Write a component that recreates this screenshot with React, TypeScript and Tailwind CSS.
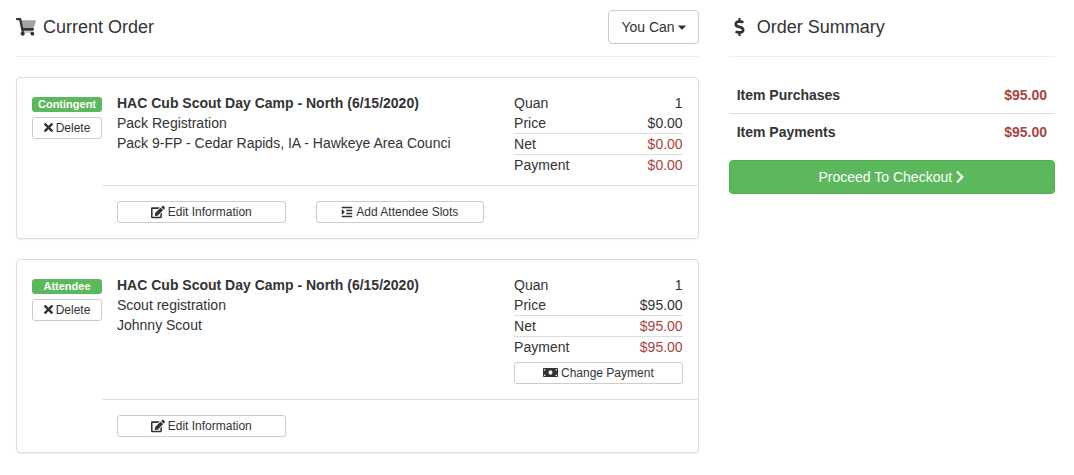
import type { ReactNode } from 'react';
import {
  FaCaretDown,
  FaChevronRight,
  FaDollarSign,
  FaEdit,
  FaIndent,
  FaMoneyBill,
  FaTimes,
} from 'react-icons/fa';

interface OrderItem {
  id: string;
  kind: string;
  title: string;
  lines: string[];
  quantity: number;
  price: string;
  net: string;
  payment: string;
  canChangePayment: boolean;
  canAddSlots: boolean;
}

const ITEMS: OrderItem[] = [
  {
    id: 'contingent',
    kind: 'Contingent',
    title: 'HAC Cub Scout Day Camp - North (6/15/2020)',
    lines: ['Pack Registration', 'Pack 9-FP - Cedar Rapids, IA - Hawkeye Area Counci'],
    quantity: 1,
    price: '$0.00',
    net: '$0.00',
    payment: '$0.00',
    canChangePayment: false,
    canAddSlots: true,
  },
  {
    id: 'attendee',
    kind: 'Attendee',
    title: 'HAC Cub Scout Day Camp - North (6/15/2020)',
    lines: ['Scout registration', 'Johnny Scout'],
    quantity: 1,
    price: '$95.00',
    net: '$95.00',
    payment: '$95.00',
    canChangePayment: true,
    canAddSlots: false,
  },
];

const TOTALS = [
  { label: 'Item Purchases', amount: '$95.00' },
  { label: 'Item Payments', amount: '$95.00' },
];

function CartIcon() {
  return (
    <svg viewBox="0 0 576 512" className="h-[18px] w-5" fill="currentColor" aria-hidden="true">
      <path
        opacity="0.45"
        d="M552 64H112l46 224h330c11 0 21-8 23-19l64-176c4-15-8-29-23-29z"
      />
      <path d="M504 405c15 10 24 25 24 43a56 56 0 1 1-95-40H231a56 56 0 1 1-67-10L94 64H24C11 64 0 53 0 40V24C0 11 11 0 24 0h102c12 0 22 8 24 19l55 269h288c15 0 26 14 23 29l-5 25c-3 11-12 19-24 19H218l7 32h256c15 0 26 0 23 12z" />
    </svg>
  );
}

function SmallButton({ children }: { children: ReactNode }) {
  return (
    <button
      type="button"
      className="flex h-[22px] w-full cursor-pointer items-center justify-center gap-[3px] rounded-[3px] border border-[#ccc] bg-white text-xs text-[#333] hover:bg-[#e6e6e6] [&>svg]:mb-px"
    >
      {children}
    </button>
  );
}

function PriceTable({ item }: { item: OrderItem }) {
  return (
    <table className="mb-[5px] w-full border-separate border-spacing-0">
      <tbody>
        <tr>
          <th className="text-left font-normal">Quan</th>
          <td className="text-right">{item.quantity}</td>
        </tr>
        <tr>
          <th className="text-left font-normal">Price</th>
          <td className="text-right">{item.price}</td>
        </tr>
        <tr>
          <th className="border-t border-[#ddd] text-left font-normal">Net</th>
          <td className="border-t border-[#ddd] text-right text-[#a94442]">{item.net}</td>
        </tr>
        <tr>
          <th className="border-t border-[#ddd] text-left font-normal">Payment</th>
          <td className="border-t border-[#ddd] text-right text-[#a94442]">{item.payment}</td>
        </tr>
      </tbody>
    </table>
  );
}

function OrderCard({ item }: { item: OrderItem }) {
  return (
    <article className="mb-5 flex rounded border border-[#ddd] bg-white py-[15px] pl-[15px] shadow-[0_1px_1px_rgba(0,0,0,0.05)]">
      <div className="w-[70px] shrink-0 pt-1">
        <div className="mb-[5px] h-[15px] rounded-[3px] bg-[#5cb85c] text-center text-[11px] leading-[15px] font-bold text-white">
          {item.kind}
        </div>
        <SmallButton>
          <FaTimes className="h-[13px] w-[9px]" />
          Delete
        </SmallButton>
      </div>
      <div className="min-w-0 flex-1">
        <div className="grid grid-cols-3 gap-x-[30px] px-[15px] pb-[5px]">
          <div className="col-span-2">
            <h3 className="font-bold">{item.title}</h3>
            {item.lines.map((line) => (
              <p key={line}>{line}</p>
            ))}
          </div>
          <div>
            <PriceTable item={item} />
            {item.canChangePayment && (
              <div className="mb-[10px]">
                <SmallButton>
                  <FaMoneyBill className="size-[15px]" />
                  Change Payment
                </SmallButton>
              </div>
            )}
          </div>
        </div>
        <div className="grid grid-cols-3 gap-x-[30px] border-t border-[#ddd] px-[15px] pt-[15px]">
          <SmallButton>
            <FaEdit className="size-[14px]" />
            Edit Information
          </SmallButton>
          {item.canAddSlots && (
            <SmallButton>
              <FaIndent className="size-3" />
              Add Attendee Slots
            </SmallButton>
          )}
        </div>
      </div>
    </article>
  );
}

export default function App() {
  return (
    <main className="grid grid-cols-3 gap-x-[30px] bg-white pt-[10px] pr-[19px] pl-4 font-['Liberation_Sans',Arial,sans-serif] text-sm leading-5 text-[#333]">
      <section className="col-span-2">
        <header className="mb-5 flex items-start justify-between border-b border-[#eee] pb-3">
          <h2 className="flex h-[34px] items-center gap-[7px] text-lg">
            <CartIcon />
            Current Order
          </h2>
          <button
            type="button"
            className="flex h-[34px] cursor-pointer items-center gap-[3px] rounded border border-[#ccc] bg-white px-3 hover:bg-[#e6e6e6]"
          >
            You Can
            <FaCaretDown className="h-4 w-2" />
          </button>
        </header>
        {ITEMS.map((item) => (
          <OrderCard key={item.id} item={item} />
        ))}
      </section>

      <section>
        <header className="mb-5 border-b border-[#eee] pb-3">
          <h2 className="flex h-[34px] items-center gap-[7px] text-lg">
            <FaDollarSign className="h-[18px] w-[21px]" />
            Order Summary
          </h2>
        </header>
        <table className="mb-[10px] w-full border-separate border-spacing-0 font-bold">
          <tbody>
            {TOTALS.map((total, i) => (
              <tr key={total.label} className={i > 0 ? '[&>*]:border-t [&>*]:border-[#ddd]' : undefined}>
                <th className="p-2 text-left">{total.label}</th>
                <td className="p-2 text-right text-[#a94442]">{total.amount}</td>
              </tr>
            ))}
          </tbody>
        </table>
        <button
          type="button"
          className="flex h-[34px] w-full cursor-pointer items-center justify-center gap-[3px] rounded border border-[#4cae4c] bg-[#5cb85c] text-white hover:bg-[#449d44]"
        >
          Proceed To Checkout
          <FaChevronRight className="h-[14px] w-[10px]" />
        </button>
      </section>
    </main>
  );
}
